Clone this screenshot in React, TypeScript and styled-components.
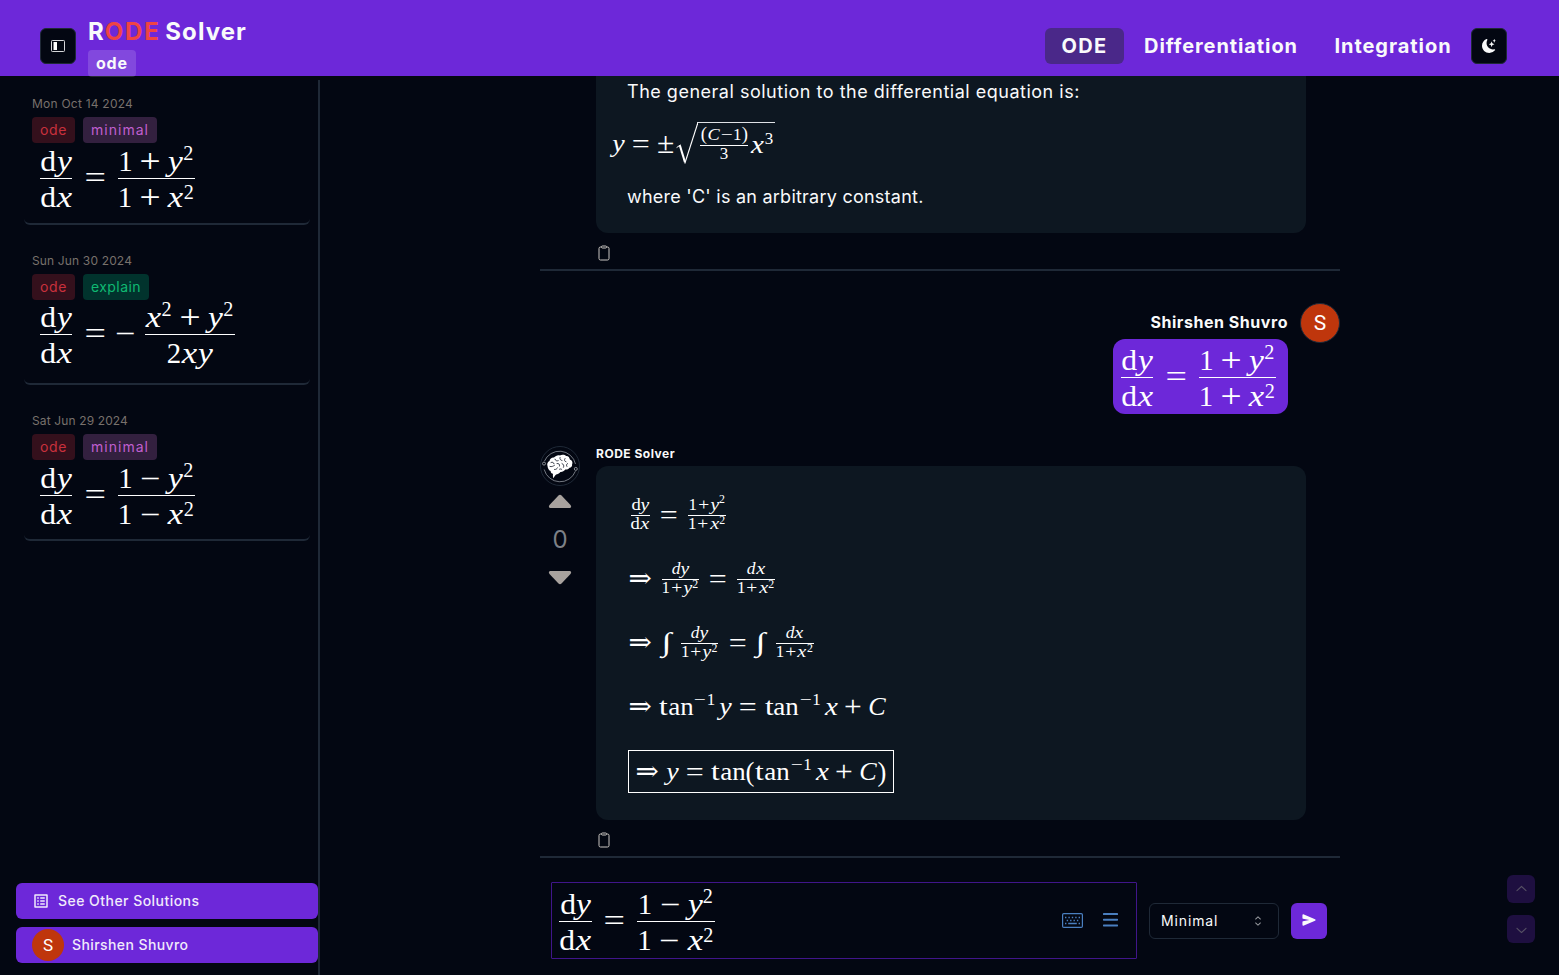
import React from "react";
import styled, { createGlobalStyle, css } from "styled-components";
import { BsMoonStarsFill } from "react-icons/bs";
import { MdOutlineListAlt } from "react-icons/md";
import { IoClipboardOutline, IoSend } from "react-icons/io5";
import { RxCaretSort, RxChevronDown, RxChevronUp } from "react-icons/rx";

const color = {
  bg: "#030712",
  violet: "#6d28d9",
  border: "#1f2937",
  panel: "#0d1721",
  text: "#f9fafb",
  stone: "#a8a29e",
};

const GlobalStyle = createGlobalStyle`
  *, *::before, *::after { box-sizing: border-box; }
  body {
    margin: 0;
    background: ${color.bg};
    color: ${color.text};
    font-family: Inter, "Open Sans", sans-serif;
    overflow: hidden;
  }
  button { font: inherit; color: inherit; border: 0; padding: 0; background: none; }
  svg { display: block; flex: none; }
`;

/* ---------- Math typesetting ---------- */

type GlyphMetrics = { w: number; italic?: boolean; sx: number; sy?: number };

const GLYPHS: Record<string, GlyphMetrics> = {
  x: { w: 0.572, italic: true, sx: 1.2 },
  y: { w: 0.53, italic: true, sx: 1.16 },
  C: { w: 0.76, italic: true, sx: 1.08 },
  d: { w: 0.556, sx: 1.1 },
  t: { w: 0.389, sx: 1.3 },
  a: { w: 0.5, sx: 1.12 },
  n: { w: 0.556, sx: 1.11 },
  "(": { w: 0.389, sx: 1.1, sy: 1.12 },
  ")": { w: 0.389, sx: 1.1, sy: 1.12 },
  "+": { w: 0.778, sx: 1.3, sy: 1.2 },
  "−": { w: 0.778, sx: 1.25 },
  "=": { w: 0.778, sx: 1.32, sy: 1.12 },
  "±": { w: 0.778, sx: 1.3, sy: 1.2 },
  "⇒": { w: 1, sx: 1.15, sy: 1.1 },
  "∫": { w: 0.6, sx: 1.5, sy: 1.1 },
};

const Formula = styled.div<{ $size: number; $height: number }>`
  display: flex;
  align-items: center;
  height: ${(p) => p.$height}px;
  font-family: "Liberation Serif", "DejaVu Serif", serif;
  font-size: ${(p) => p.$size}px;
  color: #fff;
  white-space: nowrap;
`;

const Row = styled.span`
  display: flex;
  align-items: center;
  height: 1.175em;
`;

const GlyphBox = styled.span<{ $w: number }>`
  display: flex;
  justify-content: center;
  width: ${(p) => p.$w}em;
  height: 1.175em;
  line-height: 1;
`;

const Ink = styled.span<{ $sx: number; $sy: number; $italic?: boolean }>`
  display: block;
  height: 1em;
  transform: translateY(0.035em) scale(${(p) => p.$sx}, ${(p) => p.$sy});
  transform-origin: 50% 58.75%;
  font-style: ${(p) => (p.$italic ? "italic" : "normal")};
`;

const Binary = styled.span<{ $space: number }>`
  display: flex;
  margin: 0 ${(p) => p.$space}em;
`;

const Fraction = styled.span<{ $script?: boolean }>`
  display: flex;
  flex-direction: column;
  margin: 0 0.12em;
  ${(p) => p.$script && css`
    font-size: 0.7em;
    margin: 0 0.171em 2px;
  `}
`;

const Numerator = styled.span<{ $script?: boolean }>`
  display: flex;
  height: 1.3em;
  justify-content: center;
  align-items: flex-end;
  & > span { margin-bottom: ${(p) => (p.$script ? -0.09 : -0.06)}em; }
`;

const Denominator = styled.span<{ $script?: boolean }>`
  display: flex;
  height: 1.3em;
  justify-content: center;
  align-items: flex-start;
  & > span { margin-top: ${(p) => (p.$script ? -0.01 : 0.115)}em; }
`;

const Bar = styled.span`
  height: 1px;
  background: #fff;
`;

const Power = styled.span<{ $raise: number }>`
  display: flex;
  font-size: 0.7em;
  padding: 0 0.07em ${(p) => p.$raise * 2}em 0;
`;

const Boxed = styled.span`
  display: flex;
  align-items: center;
  height: 43px;
  margin-bottom: 1px;
  padding: 3px 6px 0;
  border: 1px solid #fff;
`;

const ThinSpace = styled.span<{ $w?: number }>`
  width: ${(p) => p.$w ?? 0.167}em;
`;

const Radicand = styled.span`
  display: flex;
  align-items: center;
  height: 48px;
  padding-right: 1px;
  border-top: 1.4px solid #dfe2e6;
  margin-left: -1px;
`;

function Sym({ children, flat }: { children: string; flat?: boolean }) {
  return (
    <>
      {Array.from(children).map((ch, i) => {
        const g = GLYPHS[ch] ?? { w: 0.5, sx: 1 };
        return (
          <GlyphBox key={i} $w={g.w}>
            <Ink $sx={flat ? 1.15 : g.sx} $sy={flat ? 1 : g.sy ?? 1} $italic={g.italic}>{ch}</Ink>
          </GlyphBox>
        );
      })}
    </>
  );
}

const ItalicD = () => (
  <GlyphBox $w={0.52}><Ink $sx={1.03} $sy={1} $italic>d</Ink></GlyphBox>
);

const Bin = ({ op, tight }: { op: string; tight?: boolean }) => (
  <Binary $space={tight ? 0 : 0.222}><Sym flat={tight}>{op}</Sym></Binary>
);
const Rel = () => <Binary $space={0.278}><Sym>=</Sym></Binary>;
const Arrow = () => <><Sym>⇒</Sym><Binary $space={0.135} /></>;
const Integral = () => <><Sym>∫</Sym><ThinSpace $w={0.2} /></>;

function Sup({ children, raise = 0.43 }: { children: string; raise?: number }) {
  return <Power $raise={raise}><Sym>{children}</Sym></Power>;
}

function Frac({ num, den, script }: { num: React.ReactNode; den: React.ReactNode; script?: boolean }) {
  return (
    <Fraction $script={script}>
      <Numerator $script={script}><Row>{num}</Row></Numerator>
      <Bar />
      <Denominator $script={script}><Row>{den}</Row></Denominator>
    </Fraction>
  );
}

function Poly({ op, v, script, low }: { op: string; v: string; script?: boolean; low?: boolean }) {
  return (
    <>
      <Sym>1</Sym><Bin op={op} tight={script} /><Sym>{v}</Sym>
      <Sup raise={low ? 0.3 : 0.46}>2</Sup>
    </>
  );
}

function Quotient({ op }: { op: string }) {
  return (
    <>
      <Frac num={<Sym>dy</Sym>} den={<Sym>dx</Sym>} />
      <Rel />
      <Frac num={<Poly op={op} v="y" />} den={<Poly op={op} v="x" low />} />
    </>
  );
}

const Differential = ({ v }: { v: string }) => (
  <Frac script num={<><ItalicD /><Sym>{v}</Sym></>} den={<Poly script op="+" v={v} low />} />
);

const InverseTan = () => <><Sym>tan</Sym><Sup>−1</Sup><ThinSpace $w={0.11} /></>;

/* ---------- Shared parts ---------- */

const Label = styled.span<{ $size: number; $track?: number; $weight?: number }>`
  font-size: ${(p) => p.$size}px;
  font-weight: ${(p) => p.$weight ?? 400};
  letter-spacing: ${(p) => p.$track ?? 0}px;
  white-space: nowrap;
`;

const IconButton = styled.button`
  display: grid;
  place-items: center;
  width: 36px;
  height: 36px;
  border: 1px solid ${color.border};
  border-radius: 6px;
  background: ${color.bg};
`;

const Initial = styled.span<{ $size: number; $font: number; $ring?: boolean }>`
  display: grid;
  place-items: center;
  width: ${(p) => p.$size}px;
  height: ${(p) => p.$size}px;
  border-radius: 50%;
  background: #bf360c;
  border: ${(p) => (p.$ring ? `1px solid ${color.border}` : "0")};
  color: #fff;
  font: 400 ${(p) => p.$font}px Roboto, sans-serif;
`;

/* ---------- Header ---------- */

const Header = styled.header`
  display: flex;
  align-items: flex-start;
  height: 76px;
  padding: 16px 52px 0 40px;
  background: ${color.violet};
`;

const ToggleSlot = styled.div`
  margin: 12px 12px 0 0;
`;

const Brand = styled.div`
  display: flex;
  flex-direction: column;
  align-items: flex-start;
`;

const Title = styled.h1`
  margin: 0 0 2px;
  font-size: 24px;
  line-height: 32px;
  font-weight: 700;
  letter-spacing: 1.05px;
  white-space: nowrap;
`;

const Accent = styled.span`
  color: #ef4444;
  letter-spacing: 1.8px;
  margin-right: -2px;
`;

const ModeBadge = styled.span`
  width: 48px;
  height: 27px;
  padding-left: 8px;
  border-radius: 4px;
  background: rgba(255, 255, 255, 0.15);
  font-size: 16px;
  line-height: 26px;
  font-weight: 700;
  letter-spacing: 0.8px;
`;

const HeaderRight = styled.div`
  display: flex;
  align-items: center;
  gap: 3px;
  margin: 12px 0 0 auto;
`;

const Nav = styled.nav`
  display: flex;
  gap: 20px;
`;

const NavItem = styled.a<{ $active?: boolean; $width: number; $track: number }>`
  width: ${(p) => p.$width}px;
  height: 36px;
  border-radius: 6px;
  background: ${(p) => (p.$active ? "#4a2889" : "transparent")};
  font-size: 20px;
  font-weight: 700;
  line-height: 36px;
  letter-spacing: ${(p) => p.$track}px;
  text-align: center;
`;

/* ---------- Sidebar ---------- */

const Body = styled.div`
  display: flex;
  height: 899px;
`;

const Sidebar = styled.aside`
  display: flex;
  flex-direction: column;
  width: 320px;
  margin-top: 4px;
  padding: 8px 0 12px 16px;
  border-right: 2px solid ${color.border};
`;

const History = styled.div`
  display: flex;
  flex-direction: column;
  gap: 20px;
  flex: 1;
  padding: 0 8px;
`;

const HistoryCard = styled.article<{ $height: number }>`
  height: ${(p) => p.$height}px;
  padding: 8px 8px 0;
  border-bottom: 2px solid ${color.border};
  border-radius: 6px;
`;

const DateLine = styled.div<{ $track: number }>`
  height: 16px;
  margin-bottom: 5px;
  color: #78716c;
  font-size: 12px;
  line-height: 16px;
  letter-spacing: ${(p) => p.$track}px;
`;

const Tags = styled.div`
  display: flex;
  gap: 8px;
`;

const TAGS = {
  ode: { bg: "#34101c", fg: "#c9303c", width: 43, track: 0.63 },
  minimal: { bg: "#33203f", fg: "#c05fd0", width: 74, track: 1.03 },
  explain: { bg: "#01332d", fg: "#0fb972", width: 66, track: 0.43 },
};

const Tag = styled.span<{ $kind: keyof typeof TAGS }>`
  width: ${(p) => TAGS[p.$kind].width}px;
  height: 26px;
  padding-left: 8px;
  border-radius: 4px;
  background: ${(p) => TAGS[p.$kind].bg};
  color: ${(p) => TAGS[p.$kind].fg};
  font-size: 14px;
  line-height: 26px;
  letter-spacing: ${(p) => TAGS[p.$kind].track}px;
`;

const CardMath = styled.div`
  padding-left: 4.5px;
`;

const SidebarActions = styled.div`
  display: flex;
  flex-direction: column;
  gap: 8px;
`;

const SidebarButton = styled.button`
  display: flex;
  align-items: center;
  gap: 8px;
  height: 36px;
  padding: 0 0 1px 16px;
  border-radius: 6px;
  background: ${color.violet};
  color: #f0eafb;
`;

/* ---------- Conversation ---------- */

const Main = styled.main`
  display: flex;
  flex-direction: column;
  align-items: center;
  flex: 1;
  overflow: hidden;
`;

const Thread = styled.div`
  display: flex;
  flex-direction: column;
  width: 800px;
  margin-left: 1px;
`;

const Answer = styled.section<{ $first?: boolean }>`
  display: grid;
  grid-template-columns: 40px 710px;
  column-gap: 16px;
  margin-top: ${(p) => (p.$first ? 0 : 32)}px;
  padding-bottom: 8px;
  border-bottom: 2px solid ${color.border};
`;

const AnswerColumn = styled.div`
  grid-column: 2;
`;

const AnswerName = styled.div`
  height: 20px;
  line-height: 13px;
`;

const Panel = styled.div<{ $cut?: boolean }>`
  height: ${(p) => (p.$cut ? 157 : 354)}px;
  padding: ${(p) => (p.$cut ? "0" : "18px")} 32px 0;
  border-radius: ${(p) => (p.$cut ? "0 0 12px 12px" : "12px")};
  background: ${color.panel};
`;

const Prose = styled.p<{ $track: number }>`
  margin: 0 0 0 -1px;
  height: 30px;
  font-size: 18px;
  line-height: 31px;
  letter-spacing: ${(p) => p.$track}px;
`;

const HangingMath = styled.div`
  margin-left: -16.5px;
  padding: 13px 0 9px;
`;

const CopyButton = styled.button`
  display: block;
  height: 16px;
  margin-top: 12px;
  color: #cbc7c3;
`;

const VoteColumn = styled.div`
  display: flex;
  flex-direction: column;
  align-items: center;
`;

const Votes = styled.span`
  margin: 15px 0 14px;
  height: 32px;
  color: #7d8087;
  font-size: 24px;
  line-height: 32px;
`;

const LogoSlot = styled.div`
  margin-bottom: 8px;
`;

const Question = styled.section`
  display: flex;
  justify-content: flex-end;
  gap: 12px;
  margin-top: 32px;
`;

const QuestionColumn = styled.div`
  display: flex;
  flex-direction: column;
  align-items: flex-end;
`;

const Asker = styled.div`
  height: 36px;
  line-height: 38px;
`;

const Bubble = styled.div`
  width: 175px;
  height: 75px;
  padding-left: 4.5px;
  border-radius: 12px;
  background: ${color.violet};
`;

/* ---------- Composer ---------- */

const Composer = styled.form`
  display: flex;
  align-items: center;
  gap: 12px;
  width: 778px;
  margin-top: 24px;
  margin-left: 1px;
`;

const MathField = styled.div`
  display: flex;
  align-items: center;
  width: 586px;
  height: 77px;
  padding: 2px 18px 0 4px;
  border: 1px solid #40158a;
  border-radius: 1px;
  color: #4a7fc0;
`;

const FieldTools = styled.div`
  display: flex;
  align-items: center;
  gap: 20px;
  margin: 0 0 3px auto;
`;

const Select = styled.button`
  display: flex;
  align-items: center;
  justify-content: space-between;
  width: 130px;
  height: 36px;
  padding: 0 12px 0 11px;
  border: 1px solid ${color.border};
  border-radius: 6px;
`;

const CaretSlot = styled.span`
  color: #9b9da2;
`;

const SendButton = styled.button`
  display: grid;
  place-items: center;
  width: 36px;
  height: 36px;
  padding-bottom: 2px;
  border-radius: 6px;
  background: ${color.violet};
`;

const ScrollButtons = styled.div`
  position: fixed;
  right: 24px;
  bottom: 32px;
  display: flex;
  flex-direction: column;
  gap: 12px;
`;

const ScrollButton = styled.button`
  display: grid;
  place-items: center;
  width: 28px;
  height: 28px;
  border-radius: 6px;
  background: #1e0f40;
  color: #565064;
`;

/* ---------- Drawings ---------- */

const SidebarIcon = () => (
  <svg width="14" height="14" viewBox="0 0 14 14" fill="none">
    <rect x="0.5" y="1.5" width="13" height="11" rx="0.8" stroke="#d6d7da" />
    <rect x="2.5" y="3" width="3.5" height="8" fill="#fff" />
  </svg>
);

const VoteArrow = ({ down }: { down?: boolean }) => (
  <svg width="24" height="15" viewBox="0 0 24 15">
    <path
      d={down ? "M2 1H22Q24 2 22.5 4L13.5 13.5Q12 15 10.5 13.5L1.5 4Q0 2 2 1Z" : "M2 14H22Q24 13 22.5 11L13.5 1.5Q12 0 10.5 1.5L1.5 11Q0 13 2 14Z"}
      fill={color.stone}
    />
  </svg>
);

const MenuIcon = () => (
  <svg width="15" height="14" viewBox="0 0 15 14" fill="currentColor">
    <rect width="15" height="2" rx=".6" />
    <rect y="5.7" width="15" height="2" rx=".6" />
    <rect y="11.4" width="15" height="2" rx=".6" />
  </svg>
);

const KeyboardIcon = () => (
  <svg width="21" height="15" viewBox="0 0 21 15" fill="none" stroke="currentColor">
    <rect x="0.6" y="0.6" width="19.8" height="13.8" rx="1.2" strokeWidth="1.2" />
    <path d="M3 4.5h1.4M6.4 4.5h1.4M9.8 4.5h1.4M13.2 4.5h1.4M16.6 4.5h1.4M4.7 7.5h1.4M8.1 7.5h1.4M11.5 7.5h1.4M14.9 7.5h1.4M3 10.5h1.4M6.2 10.5h8.6M16.6 10.5h1.4" strokeWidth="1.3" />
  </svg>
);

const Radical = () => (
  <svg width="23" height="48" viewBox="0 0 23 48" fill="none" stroke="#fff">
    <path d="M1.6 25.6L5.6 22.8" strokeWidth="1" />
    <path d="M4.8 23.2L10 40.2" strokeWidth="2.1" />
    <path d="M9.8 41.5L22.9 0.7" strokeWidth="1.1" />
  </svg>
);

const BrainLogo = () => (
  <svg width="40" height="40" viewBox="0 0 40 40" fill="none">
    <circle cx="20" cy="20" r="19.5" stroke={color.border} />
    <path d="M4.4 15.2A16.4 16.4 0 0 1 35.5 18M35.4 25.2A16.4 16.4 0 0 1 4.2 23.5" stroke="#7f858d" strokeWidth=".9" />
    <circle cx="4" cy="17.6" r="1.5" stroke="#a5a9b0" strokeWidth=".8" />
    <circle cx="35.8" cy="22.9" r="1.5" stroke="#a5a9b0" strokeWidth=".8" />
    <path
      d="M7.5 20c-.8-2 .2-4.2 2-5 .3-2.200 2.500-3.700 4.400-3.400 1.600-2 4.200-2.900 6-2.100 2-1.200 5.200-.8 6.200.6 2.200-.3 3.500 1.600 3.800 3.300 2.200.8 3.200 3 2.200 4.800.3 2-1 3.400-2.600 3.600-.8 1.500-2.500 2-4.200 1.700-1.200 1.700-3.200 2.600-4.900 2.400-1 1.600-3 2.300-4.300 2.600-1 .9-1.800 2.200-2.600 3.700-.7-1.500-.7-3-.5-4.400-1.600-.2-2.600-1.400-2.300-2.800-1.700-.5-3-2.300-3.200-5z"
      fill="#fff"
    />
    <path
      d="M11 16.500c1.500-.8 2.800 0 3 1.200M15 13.200c.3 1.600 1.800 2 3.200 1.500M20 11.500c-.5 1.600.5 2.800 2 3M25 12.500c-1 1.500-.5 3 1 3.300M10 20.500c1.800.6 3.200-.4 4.500-1.200M17 17.500c2-.4 3 1 2.500 2.600M22 17.500c1.600.8 2.300 2 1.500 3.800M27.500 17.500c-1.200.8-1.400 2-.6 3M14.500 23.500c1.300.2 2.500-.5 3-1.700M19.500 23.200c.8-.4 1.600-.4 2.300.3"
      stroke="#111827"
      strokeWidth=".8"
      strokeLinecap="round"
    />
  </svg>
);

/* ---------- Page ---------- */

export default function App() {
  return (
    <>
      <GlobalStyle />
      <Header>
        <ToggleSlot><IconButton aria-label="Toggle sidebar"><SidebarIcon /></IconButton></ToggleSlot>
        <Brand>
          <Title>R<Accent>ODE</Accent> Solver</Title>
          <ModeBadge>ode</ModeBadge>
        </Brand>
        <HeaderRight>
          <Nav>
            <NavItem $active $width={79} $track={1.3}>ODE</NavItem>
            <NavItem $width={154} $track={0.91}>Differentiation</NavItem>
            <NavItem $width={150} $track={0.95}>Integration</NavItem>
          </Nav>
          <IconButton aria-label="Theme"><BsMoonStarsFill size={14} /></IconButton>
        </HeaderRight>
      </Header>

      <Body>
        <Sidebar>
          <History>
            <HistoryCard $height={137}>
              <DateLine $track={0.23}>Mon Oct 14 2024</DateLine>
              <Tags><Tag $kind="ode">ode</Tag><Tag $kind="minimal">minimal</Tag></Tags>
              <CardMath><Formula $size={28.8} $height={71}><Quotient op="+" /></Formula></CardMath>
            </HistoryCard>
            <HistoryCard $height={140}>
              <DateLine $track={0.15}>Sun Jun 30 2024</DateLine>
              <Tags><Tag $kind="ode">ode</Tag><Tag $kind="explain">explain</Tag></Tags>
              <CardMath>
                <Formula $size={28.8} $height={69}>
                  <Frac num={<Sym>dy</Sym>} den={<Sym>dx</Sym>} />
                  <Rel />
                  <Sym>−</Sym>
                  <ThinSpace />
                  <Frac
                    num={<><Sym>x</Sym><Sup>2</Sup><Bin op="+" /><Sym>y</Sym><Sup>2</Sup></>}
                    den={<Sym>2xy</Sym>}
                  />
                </Formula>
              </CardMath>
            </HistoryCard>
            <HistoryCard $height={136}>
              <DateLine $track={0.13}>Sat Jun 29 2024</DateLine>
              <Tags><Tag $kind="ode">ode</Tag><Tag $kind="minimal">minimal</Tag></Tags>
              <CardMath><Formula $size={28.8} $height={71}><Quotient op="−" /></Formula></CardMath>
            </HistoryCard>
          </History>
          <SidebarActions>
            <SidebarButton>
              <MdOutlineListAlt size={18} />
              <Label $size={14} $weight={500} $track={0.46}>See Other Solutions</Label>
            </SidebarButton>
            <SidebarButton>
              <Initial $size={32} $font={17}>S</Initial>
              <Label $size={14} $weight={500} $track={0.41}>Shirshen Shuvro</Label>
            </SidebarButton>
          </SidebarActions>
        </Sidebar>

        <Main>
          <Thread>
            <Answer $first>
              <AnswerColumn>
                <Panel $cut>
                  <Prose $track={0.51}>The general solution to the differential equation is:</Prose>
                  <HangingMath>
                    <Formula $size={24.2} $height={53}>
                      <Sym>y</Sym><Rel /><Sym>±</Sym>
                      <Radical />
                      <Radicand>
                        <Frac script num={<Sym>(C−1)</Sym>} den={<Sym>3</Sym>} />
                        <Sym>x</Sym><Sup raise={0.36}>3</Sup>
                      </Radicand>
                    </Formula>
                  </HangingMath>
                  <Prose $track={0.24}>where 'C' is an arbitrary constant.</Prose>
                </Panel>
                <CopyButton aria-label="Copy"><IoClipboardOutline size={16} /></CopyButton>
              </AnswerColumn>
            </Answer>

            <Question>
              <QuestionColumn>
                <Asker><Label $size={16} $weight={700} $track={0.54}>Shirshen Shuvro</Label></Asker>
                <Bubble><Formula $size={28.8} $height={77}><Quotient op="+" /></Formula></Bubble>
              </QuestionColumn>
              <Initial $size={40} $font={21} $ring>S</Initial>
            </Question>

            <Answer>
              <VoteColumn>
                <LogoSlot><BrainLogo /></LogoSlot>
                <VoteArrow />
                <Votes>0</Votes>
                <VoteArrow down />
              </VoteColumn>
              <AnswerColumn>
                <AnswerName><Label $size={12} $weight={700} $track={0.5}>RODE Solver</Label></AnswerName>
                <Panel>
                  <Formula $size={24.2} $height={64}>
                    <Frac script num={<Sym>dy</Sym>} den={<Sym>dx</Sym>} />
                    <Rel />
                    <Frac script num={<Poly script op="+" v="y" />} den={<Poly script op="+" v="x" low />} />
                  </Formula>
                  <Formula $size={24.2} $height={64}>
                    <Arrow /><Differential v="y" /><Rel /><Differential v="x" />
                  </Formula>
                  <Formula $size={24.2} $height={64}>
                    <Arrow /><Integral /><Differential v="y" /><Rel /><Integral /><Differential v="x" />
                  </Formula>
                  <Formula $size={24.2} $height={64}>
                    <Arrow /><InverseTan /><Sym>y</Sym><Rel /><InverseTan /><Sym>x</Sym><Bin op="+" /><Sym>C</Sym>
                  </Formula>
                  <Formula $size={24.2} $height={64}>
                    <Boxed>
                      <Arrow /><Sym>y</Sym><Rel /><Sym>tan(</Sym><InverseTan /><Sym>x</Sym><Bin op="+" /><Sym>C)</Sym>
                    </Boxed>
                  </Formula>
                </Panel>
                <CopyButton aria-label="Copy"><IoClipboardOutline size={16} /></CopyButton>
              </AnswerColumn>
            </Answer>
          </Thread>

          <Composer>
            <MathField>
              <Formula $size={28.8} $height={75}><Quotient op="−" /></Formula>
              <FieldTools><KeyboardIcon /><MenuIcon /></FieldTools>
            </MathField>
            <Select type="button">
              <Label $size={14} $track={0.86}>Minimal</Label>
              <CaretSlot><RxCaretSort size={16} /></CaretSlot>
            </Select>
            <SendButton type="button" aria-label="Send"><IoSend size={14} /></SendButton>
          </Composer>
        </Main>
      </Body>

      <ScrollButtons>
        <ScrollButton aria-label="Scroll up"><RxChevronUp size={17} /></ScrollButton>
        <ScrollButton aria-label="Scroll down"><RxChevronDown size={17} /></ScrollButton>
      </ScrollButtons>
    </>
  );
}
